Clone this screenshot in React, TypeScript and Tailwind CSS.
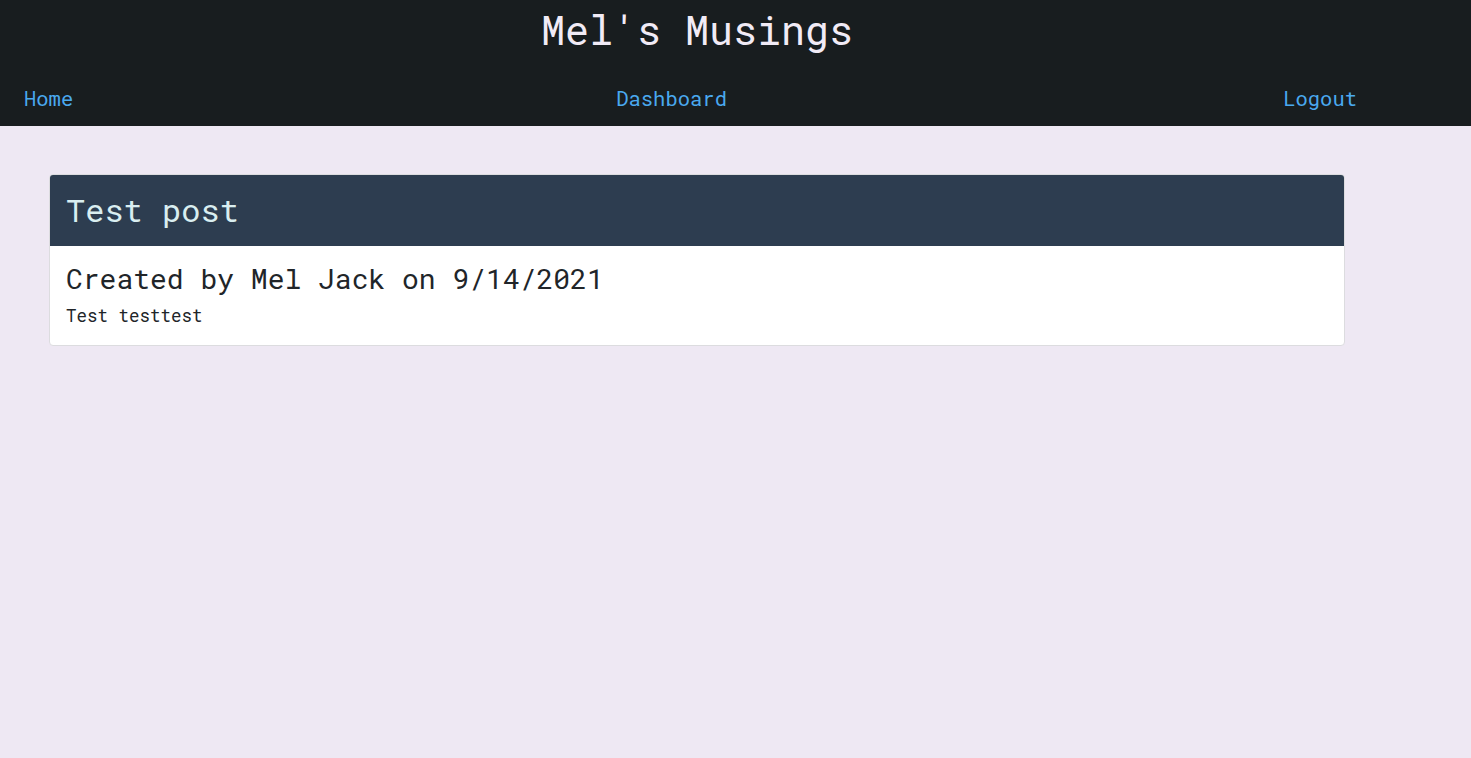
const FONT = "font-['Roboto_Mono','DejaVu_Sans_Mono',monospace]"

const POSTS = [
  { title: "Test post", author: "Mel Jack", date: "9/14/2021", body: "Test testtest" },
]

export default function App() {
  return (
    <div className={`min-h-screen bg-[#eee8f3] ${FONT}`}>
      {/* Header */}
      <header className="bg-[#181d1f] pt-[6px] pb-[15px]">
        <h1 className="text-center pr-[77px] text-[40px] leading-[48px] text-[#f1ebf6]">Mel's Musings</h1>
        <nav className="mt-[33px] flex items-center text-[20.5px] leading-[24px] text-[#4aa9ef]">
          <a href="#" className="ml-6">Home</a>
          <a href="#" className="ml-[543px]">Dashboard</a>
          <a href="#" className="ml-auto mr-[114px]">Logout</a>
        </nav>
      </header>

      {/* Posts */}
      <main className="pt-[48px] pl-[49px] pr-[126px]">
        {POSTS.map((p) => (
          <div key={p.title} className="bg-white border border-[#dcdcdf] rounded overflow-hidden">
            <div className="bg-[#2d3d50] pl-4 pt-[15px] pb-[16px] text-[32px] leading-[40px] text-[#d9eef0]">
              {p.title}
            </div>
            <div className="pl-4 pt-[16px] pb-[19px] text-[#212529]">
              <p className="text-[28px] leading-[34px]">Created by {p.author} on {p.date}</p>
              <p className="mt-[9px] text-[17.5px] leading-[21px]">{p.body}</p>
            </div>
          </div>
        ))}
      </main>
    </div>
  )
}
